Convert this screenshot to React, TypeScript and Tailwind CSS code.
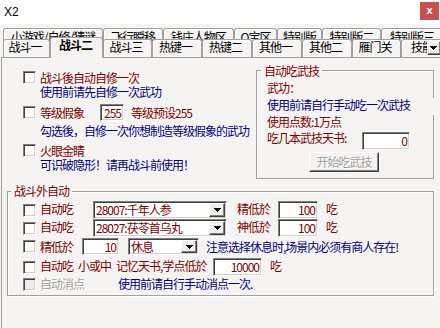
import React from "react";

const FONT = "font-['Noto_Sans_CJK_SC','Noto_Sans_CJK_JP',sans-serif]";
const RED = "text-[#800000]";
const NAVY = "text-[#000080]";
const SUNKEN =
  "border border-t-[#808080] border-l-[#808080] border-r-white border-b-white shadow-[inset_1px_1px_0_#404040,inset_-1px_-1px_0_#d4d0c8]";
const RAISED =
  "border border-t-white border-l-white border-r-[#404040] border-b-[#404040] shadow-[inset_-1px_-1px_0_#808080]";
const ETCHED = "border border-[#a0a0a0] shadow-[inset_1px_1px_0_#fff,1px_1px_0_#fff]";
const UP = "relative top-[-1px]";

const backTabs = [
  { label: "小游戏/自修/猜谜", w: "w-[100px]" },
  { label: "飞行瞬移", w: "w-[60px]" },
  { label: "钱庄人物区", w: "w-[71px]" },
  { label: "O宝区", w: "w-[43px]" },
  { label: "特别版", w: "w-[45px]" },
  { label: "特别版二", w: "w-[59px]" },
  { label: "特别版三", w: "w-[62px]" },
];

const frontTabs = [
  { label: "战斗一", w: "w-[47px]" },
  { label: "战斗二", w: "w-[53px]", active: true },
  { label: "战斗三", w: "w-[49px]" },
  { label: "热键一", w: "w-[50px]" },
  { label: "热键二", w: "w-[50px]" },
  { label: "其他一", w: "w-[50px]" },
  { label: "其他二", w: "w-[50px]" },
  { label: "雁门关", w: "w-[49px]" },
  { label: "技能", w: "w-[45px]" },
];

function Arrow() {
  return (
    <svg width="7" height="4" viewBox="0 0 7 4" shapeRendering="crispEdges">
      <path d="M0 0h7v1h-1v1h-1v1h-1v1h-1v-1h-1v-1h-1v-1h-1z" fill="#000" />
    </svg>
  );
}

function Check({ disabled }: { disabled?: boolean }) {
  return (
    <span
      className={`block h-[13px] w-[13px] shrink-0 ${SUNKEN} ${disabled ? "bg-[#ebebeb]" : "bg-white"}`}
    />
  );
}

function Field({ value, className }: { value: string; className: string }) {
  return (
    <div className={`flex shrink-0 items-center justify-end bg-white pr-[2px] ${SUNKEN} ${RED} ${className}`}>
      {value}
    </div>
  );
}

function Combo({ value, className }: { value: string; className: string }) {
  return (
    <div className={`flex shrink-0 items-stretch bg-white ${SUNKEN} ${className}`}>
      <span className={`flex-1 self-center overflow-hidden pl-[2px] ${RED}`}>{value}</span>
      <span className={`m-[1px] flex w-[16px] items-center justify-center bg-[#f0f0f0] ${RAISED}`}>
        <Arrow />
      </span>
    </div>
  );
}

export default function App() {
  return (
    <div
      className={`relative h-[328px] w-[440px] overflow-hidden whitespace-nowrap bg-[#f5f4f2] text-[12px] leading-[14px] tracking-[-1px] text-black ${FONT}`}
    >
      {/* title bar */}
      <div className="flex h-[24px] items-start justify-between bg-white">
        <span className="pl-[4px] pt-[5px] font-['Liberation_Sans',sans-serif] tracking-normal">X2</span>
        <span className="mr-[1px] mt-[2px] flex h-[18px] w-[19px] items-center justify-center bg-[#c75050] pb-[2px] font-['Liberation_Sans',sans-serif] text-[11px] font-bold tracking-normal text-white">
          x
        </span>
      </div>

      {/* tabs, two rows; the back row is partly hidden by the front row */}
      <div className="pt-[4px]">
        <div className="flex h-[14px] pl-[3px]">
          {backTabs.map((t) => (
            <div
              key={t.label}
              className={`h-[14px] shrink-0 overflow-hidden rounded-t-[3px] border border-b-0 border-[#a0a0a0] pt-[1px] text-center shadow-[inset_1px_1px_0_#fff] ${t.w}`}
            >
              {t.label}
            </div>
          ))}
        </div>
        <div className="relative z-10 -mt-[3px] flex h-[18px] items-start pl-[3px]">
          {frontTabs.map((t) =>
            t.active ? (
              <div
                key={t.label}
                className={`-mt-[2px] h-[21px] shrink-0 rounded-t-[3px] border border-b-0 border-[#a0a0a0] bg-[#f5f4f2] pr-[2px] text-center font-bold shadow-[inset_1px_1px_0_#fff] ${t.w}`}
              >
                {t.label}
              </div>
            ) : (
              <div
                key={t.label}
                className={`h-[18px] shrink-0 overflow-hidden rounded-t-[3px] border border-b-0 border-[#a0a0a0] bg-[#f5f4f2] pr-[3px] text-center shadow-[inset_1px_1px_0_#fff] ${t.w}`}
              >
                {t.label}
              </div>
            )
          )}
          <span
            className={`absolute left-[427px] top-[2px] flex h-[14px] w-[14px] items-center justify-center bg-[#f0f0f0] pr-[1px] ${RAISED}`}
          >
            <Arrow />
          </span>
        </div>
      </div>

      {/* tab panel */}
      <div className="ml-[1px] h-[272px] border-l border-t border-[#a0a0a0]">
        <div className="flex pt-[12px]">
          {/* left column */}
          <div className="w-[254px] shrink-0 pl-[21px] pt-[1px]">
            <div className="flex h-[13px] items-center">
              <Check />
              <span className={`ml-[4px] ${RED}`}>战斗後自动自修一次</span>
            </div>
            <div className={`mt-[1px] pl-[17px] ${NAVY}`}>使用前请先自修一次武功</div>
            <div className="mt-[5px] flex h-[17px] items-center">
              <Check />
              <span className={`ml-[4px] w-[60px] ${RED}`}>等级假象</span>
              <Field value="255" className="h-[17px] w-[24px]" />
              <span className={`ml-[7px] ${RED}`}>等级预设255</span>
            </div>
            <div className={`mt-[3px] pl-[17px] ${NAVY}`}>勾选後，自修一次你想制造等级假象的武功</div>
            <div className="mt-[6px] flex h-[13px] items-center">
              <Check />
              <span className={`ml-[4px] ${RED}`}>火眼金睛</span>
            </div>
            <div className={`mt-[1px] pl-[17px] ${NAVY}`}>可识破隐形！请再战斗前使用！</div>
          </div>

          {/* 自动吃武技 */}
          <div className={`relative h-[109px] w-[178px] shrink-0 pl-[10px] pt-[10px] ${ETCHED}`}>
            <span className={`absolute left-[4px] top-[-7px] bg-[#f5f4f2] px-[3px] ${RED}`}>自动吃武技</span>
            <span className="absolute right-[-2px] top-[27px] h-[17px] w-[3px] bg-[#f5f4f2]" />
            <div className={RED}>武功：</div>
            <div className={`mt-[3px] ${NAVY}`}>使用前请自行手动吃一次武技</div>
            <div className={`mt-[3px] ${RED}`}>使用点数:1万点</div>
            <div className="mt-[3px] flex h-[18px] items-start">
              <span className={`-mt-[1px] w-[95px] ${RED}`}>吃几本武技天书:</span>
              <Field value="0" className="h-[18px] w-[48px]" />
            </div>
            <div
              className={`ml-[42px] mt-[2px] flex h-[20px] w-[70px] items-center justify-center bg-[#f3f2f0] text-[#a0a0a0] [text-shadow:1px_1px_0_#fff] ${RAISED}`}
            >
              开始吃武技
            </div>
          </div>
        </div>

        {/* 战斗外自动 */}
        <div className={`relative ml-[5px] mt-[12px] h-[105px] w-[427px] pl-[15px] pt-[9px] ${ETCHED}`}>
          <span className={`absolute left-[3px] top-[-8px] bg-[#f5f4f2] px-[3px] ${RED}`}>战斗外自动</span>

          <div className="flex h-[18px] items-center">
            <Check />
            <span className={`ml-[4px] w-[53px] ${RED} ${UP}`}>自动吃</span>
            <Combo value="28007:千年人参" className="h-[18px] w-[134px]" />
            <span className={`ml-[10px] w-[41px] ${RED} ${UP}`}>精低於</span>
            <Field value="100" className="h-[18px] w-[40px]" />
            <span className={`ml-[8px] ${RED} ${UP}`}>吃</span>
          </div>
          <div className="flex h-[18px] items-center">
            <Check />
            <span className={`ml-[4px] w-[53px] ${RED} ${UP}`}>自动吃</span>
            <Combo value="28027:茯苓首乌丸" className="h-[18px] w-[134px]" />
            <span className={`ml-[10px] w-[41px] ${RED} ${UP}`}>神低於</span>
            <Field value="100" className="h-[18px] w-[40px]" />
            <span className={`ml-[8px] ${RED} ${UP}`}>吃</span>
          </div>
          <div className="mt-[1px] flex h-[17px] items-center">
            <Check />
            <span className={`ml-[4px] w-[42px] ${RED}`}>精低於</span>
            <Field value="10" className="h-[17px] w-[37px]" />
            <Combo value="休息" className="ml-[9px] h-[17px] w-[71px]" />
            <span className={`ml-[7px] ${NAVY}`}>注意选择休息时,场景内必须有商人存在!</span>
          </div>
          <div className="mt-[3px] flex h-[18px] items-center">
            <Check />
            <span className={`ml-[4px] w-[173px] ${RED} ${UP}`}>自动吃{"\u2002"}小或中{"\u2002"}记忆天书,学点低於</span>
            <Field value="10000" className="h-[18px] w-[49px]" />
            <span className={`ml-[8px] ${RED} ${UP}`}>吃</span>
          </div>
          <div className="mt-[1px] flex h-[14px] items-center">
            <Check disabled />
            <span className="ml-[4px] w-[78px] text-[#a0a0a0] [text-shadow:1px_1px_0_#fff]">自动消点</span>
            <span className={NAVY}>使用前请自行手动消点一次.</span>
          </div>
        </div>
      </div>
    </div>
  );
}
